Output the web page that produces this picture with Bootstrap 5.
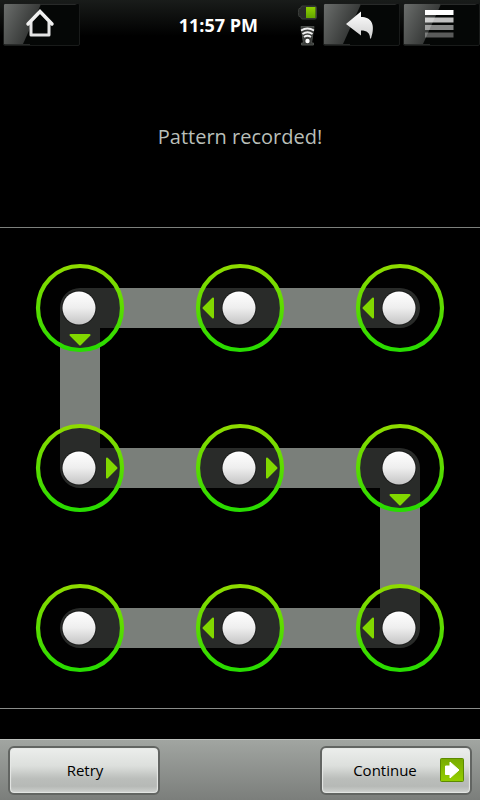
<!DOCTYPE html>
<html lang="en">
<head>
<meta charset="utf-8">
<meta name="viewport" content="width=device-width, initial-scale=1">
<title>Unlock pattern</title>
<link rel="stylesheet" href="https://cdn.jsdelivr.net/npm/bootstrap@5.3.0/dist/css/bootstrap.min.css">
<style>
body{background:#000;font-family:"Open Sans","Noto Sans",sans-serif}
.statusbar{height:48px;background:linear-gradient(#191c1a,#000 75%);padding:3px 0 2px 3px}
.key{width:77px;height:43px;border:1px solid #191b1a;border-radius:2px;overflow:hidden;background:#050706}
.key svg{width:75px;height:41px}
.keys{gap:3px}
.clock{font-size:18px;line-height:24px;font-weight:700;color:#fff;margin-right:40px}
.indicators{width:19px;margin-right:6px;padding-top:2px;gap:6px}
.message{height:180px;padding-bottom:2px;border-bottom:1px solid #7d807d;color:#b9bfb9;font-size:20px;line-height:28px}
.lock-grid{border-bottom:1px solid #8a8c8a}
.actions{height:61px;margin-top:30px;padding:6px 8px 5px;background:linear-gradient(#a1a5a1,#7b7e7b);border-top:1px solid #bcbfbc}
.action{width:152px;height:49px;padding:0 6px 2px 8px;border:2px solid #626562;border-radius:6px;background:linear-gradient(#eceeec,#dcdfdc 40%,#bbbebb 68%,#b6b9b6 85%,#d0d3d0);box-shadow:inset 0 0 1px 1px #e6e8e6;color:#000;font-size:15px;line-height:24px}
.action:hover{color:#000}
</style>
<script src="https://cdn.jsdelivr.net/npm/bootstrap@5.3.0/dist/js/bootstrap.bundle.min.js"></script>
</head>
<body class="d-flex flex-column min-vh-100">
<svg class="position-absolute" width="0" height="0" aria-hidden="true">
  <defs>
    <linearGradient id="gloss" x1="0" y1="0" x2="1" y2="0.5"><stop offset="0" stop-color="#6b6e6c"/><stop offset="1" stop-color="#2b2d2c"/></linearGradient>
    <linearGradient id="silver" x1="0" y1="0" x2="0" y2="1"><stop offset="0" stop-color="#fff"/><stop offset="1" stop-color="#cfcfcf"/></linearGradient>
  </defs>
</svg>
<header class="statusbar d-flex align-items-center">
  <button class="key p-0 d-flex me-auto" type="button" aria-label="Home">
    <svg viewBox="0 0 75 41"><path d="M0 0H37L19 40H0Z" fill="url(#gloss)"/><path d="M37 0H73L71 1H36ZM0 40H26V41H0Z" fill="#282a29"/><path d="M26 18V31H45V18L35.500 8Z" fill="#050706"/><path d="M27 18V31H45V18" fill="none" stroke="#e4e4e4" stroke-width="3" stroke-linejoin="round"/><path d="M24 20L36 7.500L48 20" fill="none" stroke="#f0f0f0" stroke-width="3.500" stroke-linecap="round"/></svg>
  </button>
  <time class="clock">11:57 PM</time>
  <div class="indicators d-flex flex-column align-items-center">
    <svg width="19" height="15" viewBox="0 0 19 15" role="img" aria-label="Battery"><defs><linearGradient id="batt" x1="0" y1="0" x2="0" y2="1"><stop offset="0" stop-color="#8fd000"/><stop offset="1" stop-color="#62a500"/></linearGradient></defs><path d="M4 1H17Q18.500 1 18.500 3V12Q18.500 14 17 14H4Q3 14 2.500 11.500H1Q0.500 11 .5 7.500T1 3.500H2.500Q3 1 4 1Z" fill="#292b29" stroke="#3b3e3b"/><rect x="8" y="2" width="9.500" height="11" fill="url(#batt)"/></svg>
    <svg width="17" height="20" viewBox="0 0 17 20" role="img" aria-label="Wi-Fi"><path d="M2 .5H15L12.500 17H14.500V19H2.500V17H4.500Z" fill="#3a3c3a" stroke="#4d504d"/><g fill="none" stroke="#f0f0f0" stroke-width="1.800"><path d="M2 4.500Q8.500 .5 15 4.500"/><path d="M3.500 8Q8.500 4.500 13.500 8"/><path d="M5 11Q8.500 8.500 12 11"/></g><circle cx="8.500" cy="15" r="2.200" fill="#fff"/></svg>
  </div>
  <div class="keys d-flex">
    <button class="key p-0 d-flex" type="button" aria-label="Back">
      <svg viewBox="0 0 75 41"><path d="M0 0H37L19 40H0Z" fill="url(#gloss)"/><path d="M37 0H73L71 1H36ZM0 40H26V41H0Z" fill="#282a29"/><path d="M22 20L37 7.500V13C47 13 52 20 47 34.500H46C46 29 43 26.500 37 26.500V31.500Z" fill="url(#silver)"/></svg>
    </button>
    <button class="key p-0 d-flex" type="button" aria-label="Menu">
      <svg viewBox="0 0 75 41"><path d="M0 0H37L19 40H0Z" fill="url(#gloss)"/><path d="M37 0H73L71 1H36ZM0 40H26V41H0Z" fill="#282a29"/><path d="M21 6H49.500V11H21Z" fill="#fff"/><path d="M21 13.500H49.500V18.500H21Z" fill="#fff" fill-opacity=".75"/><path d="M21 21H49.500V26H21Z" fill="#fff" fill-opacity=".52"/><path d="M21 28.500H49.500V33.500H21Z" fill="#fff" fill-opacity=".34"/></svg>
    </button>
  </div>
</header>
<main>
  <p class="message d-flex align-items-center justify-content-center mb-0">Pattern recorded!</p>
  <div class="lock-grid">
    <svg class="d-block w-100" viewBox="0 0 480 480" role="img" aria-label="Recorded pattern">
      <defs>
        <linearGradient id="ringColor" x1="0" y1="0" x2="0" y2="1"><stop offset="0" stop-color="#8edb00"/><stop offset="1" stop-color="#27dc00"/></linearGradient>
        <linearGradient id="knobColor" x1="0" y1="0" x2="0" y2="1"><stop offset="0" stop-color="#fff"/><stop offset=".5" stop-color="#eee"/><stop offset="1" stop-color="#c4c4c4"/></linearGradient>
        <g id="node"><circle r="42" fill="#010201" fill-opacity=".67"/><circle r="42" fill="none" stroke="url(#ringColor)" stroke-width="4.200"/><circle cx="-1" r="17.500" fill="#111" fill-opacity=".6"/><circle cx="-1" r="16.500" fill="url(#knobColor)"/></g>
        <path id="tip" d="M27 -9.500L36.500 0L27 9.500Z" fill="#82d800" stroke="#82d800" stroke-width="2" stroke-linejoin="round"/>
      </defs>
      <path d="M400 80H80V240H400V400H80" fill="none" stroke="#7a7f7a" stroke-width="40" stroke-linecap="round" stroke-linejoin="round"/>
      <use href="#node" x="80" y="80"/><use href="#node" x="240" y="80"/><use href="#node" x="400" y="80"/>
      <use href="#node" x="80" y="240"/><use href="#node" x="240" y="240"/><use href="#node" x="400" y="240"/>
      <use href="#node" x="80" y="400"/><use href="#node" x="240" y="400"/><use href="#node" x="400" y="400"/>
      <use href="#tip" transform="translate(400 80) rotate(180)"/>
      <use href="#tip" transform="translate(240 80) rotate(180)"/>
      <use href="#tip" transform="translate(80 80) rotate(90)"/>
      <use href="#tip" transform="translate(80 240)"/>
      <use href="#tip" transform="translate(240 240)"/>
      <use href="#tip" transform="translate(400 240) rotate(90)"/>
      <use href="#tip" transform="translate(400 400) rotate(180)"/>
      <use href="#tip" transform="translate(240 400) rotate(180)"/>
    </svg>
  </div>
</main>
<footer class="actions d-flex justify-content-between mt-auto">
  <button class="action btn" type="button">Retry</button>
  <button class="action btn d-flex align-items-center" type="button"><span class="flex-grow-1">Continue</span>
    <svg width="24" height="24" viewBox="0 0 24 24" aria-hidden="true"><defs><linearGradient id="goColor" x1="0" y1="0" x2="0" y2="1"><stop offset="0" stop-color="#78aa00"/><stop offset="1" stop-color="#94ce00"/></linearGradient></defs><rect x=".5" y=".5" width="23" height="23" rx="1" fill="url(#goColor)" stroke="#5c8a00"/><path d="M5.500 8H10V4L19 12L10 20V16.500H5.500Z" fill="#fff" stroke="#fff" stroke-linejoin="round"/></svg>
  </button>
</footer>
</body>
</html>
